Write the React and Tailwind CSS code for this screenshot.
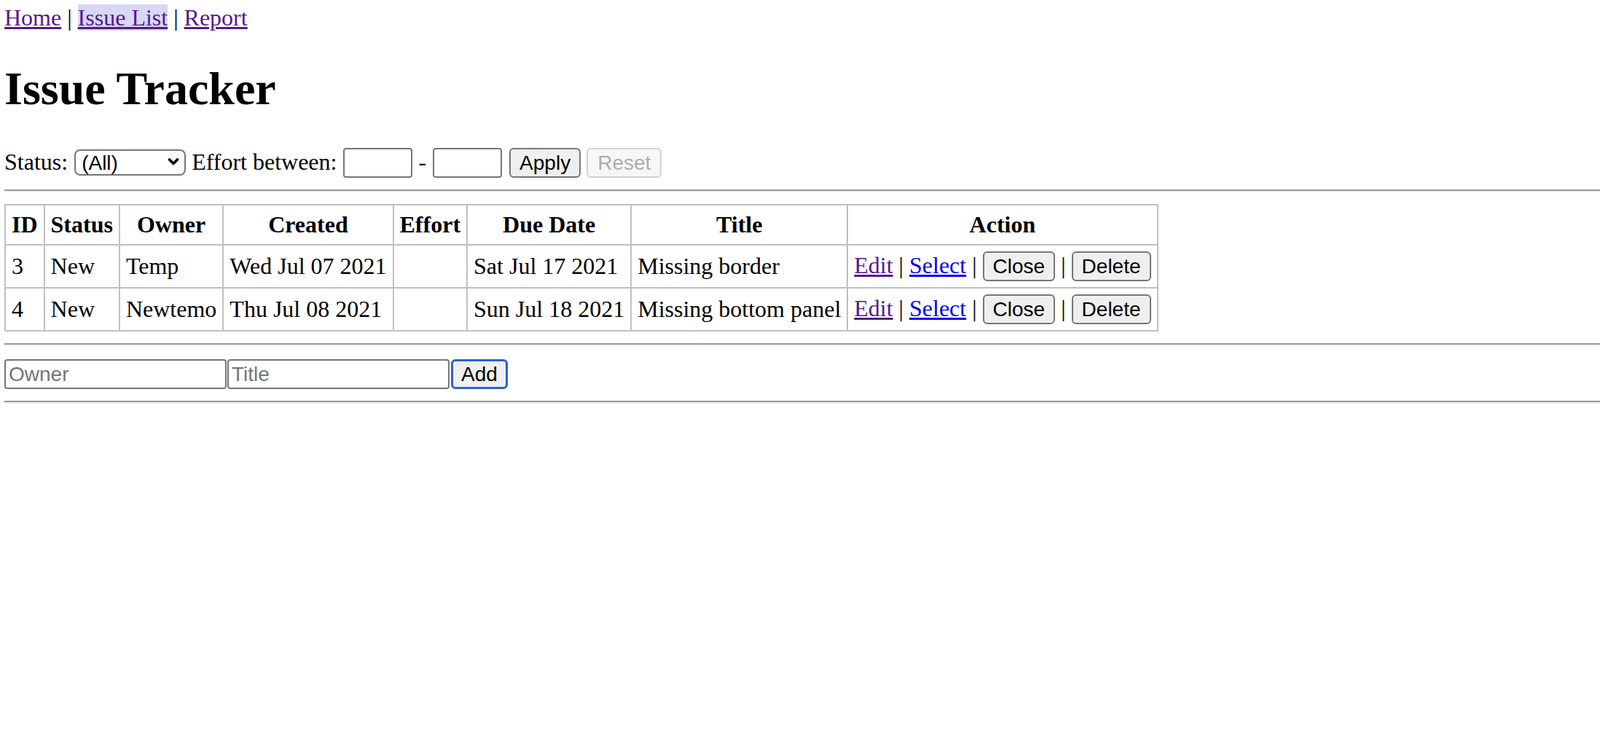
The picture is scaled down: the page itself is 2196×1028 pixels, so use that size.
import React from "react";

function Hr() {
  return <div className="my-[16px] h-0 border-t-2 border-b-2 border-t-[#9a9a9a] border-b-[#eeeeee]" />;
}

const ctrlFont = "font-['Liberation_Sans',Arial,sans-serif] text-[28px] leading-[normal]";
const btn = `${ctrlFont} inline-block h-[41px] px-[12px] rounded-[6px] border-2 border-[#767676] bg-[#efefef] text-black align-baseline`;
const textInput = `${ctrlFont} h-[41px] px-[4px] rounded-[4px] border-2 border-[#767676] bg-white text-black align-baseline placeholder:text-[#757575]`;
const cell = "border-2 border-[#c0c0c0] p-[8px]";
const th = `${cell} font-bold text-center`;

const rows = [
  { id: 3, status: "New", owner: "Temp", created: "Wed Jul 07 2021", effort: "", due: "Sat Jul 17 2021", title: "Missing border" },
  { id: 4, status: "New", owner: "Newtemo", created: "Thu Jul 08 2021", effort: "", due: "Sun Jul 18 2021", title: "Missing bottom panel" },
];

export default function App() {
  return (
    <div className="min-h-screen bg-white pt-[6px] pl-[6px] font-['Liberation_Serif','Times_New_Roman',serif] text-[32px] leading-[normal] text-black">
      <div>
        <a href="#" className="text-[#551a8b] underline">Home</a>
        {" | "}
        <a href="#" className="text-[#551a8b] underline bg-[#d8d8f5]">Issue List</a>
        {" | "}
        <a href="#" className="text-[#551a8b] underline">Report</a>
      </div>

      <h1 className="mt-[42px] mb-[44px] text-[64px] font-bold leading-[normal]">Issue Tracker</h1>

      <div>
        Status:{" "}
        <span className="relative inline-block align-baseline ml-[1px]">
          <select
            className={`${ctrlFont} appearance-none w-[153px] h-[36px] pl-[8px] pr-[30px] rounded-[8px] border-2 border-[#767676] bg-white text-black`}
            defaultValue="all"
          >
            <option value="all">(All)</option>
            <option value="New">New</option>
          </select>
          <svg
            className="pointer-events-none absolute right-[9px] top-1/2 -translate-y-1/2"
            width="16"
            height="12"
            viewBox="0 0 16 12"
          >
            <path d="M2.5 3 L8 8.5 L13.5 3" fill="none" stroke="#000" strokeWidth="3.6" strokeLinecap="round" strokeLinejoin="round" />
          </svg>
        </span>{" "}
        Effort between:{" "}
        <input className={`${textInput} w-[95px] ml-[1px]`} />
        {" - "}
        <input className={`${textInput} w-[95px] ml-[1px]`} />{" "}
        <button className={`${btn} ml-[2px]`}>Apply</button>{" "}
        <button
          disabled
          className={`${ctrlFont} inline-block h-[41px] px-[13px] rounded-[6px] border-2 border-[#d3d3d3] bg-[#f7f7f7] text-[#adadad] align-baseline`}
        >
          Reset
        </button>
      </div>

      <Hr />

      <table className="border-collapse">
        <thead>
          <tr>
            <th className={th}>ID</th>
            <th className={th}>Status</th>
            <th className={th}>Owner</th>
            <th className={th}>Created</th>
            <th className={th}>Effort</th>
            <th className={th}>Due Date</th>
            <th className={th}>Title</th>
            <th className={th}>Action</th>
          </tr>
        </thead>
        <tbody>
          {rows.map((r) => (
            <tr key={r.id}>
              <td className={cell}>{r.id}</td>
              <td className={cell}>{r.status}</td>
              <td className={cell}>{r.owner}</td>
              <td className={cell}>{r.created}</td>
              <td className={cell}>{r.effort}</td>
              <td className={cell}>{r.due}</td>
              <td className={cell}>{r.title}</td>
              <td className={`${cell} whitespace-nowrap`}>
                <a href="#" className="text-[#551a8b] underline">Edit</a>
                {" | "}
                <a href="#" className="text-[#0000ee] underline">Select</a>
                {" | "}
                <button className={btn}>Close</button>
                {" | "}
                <button className={btn}>Delete</button>
              </td>
            </tr>
          ))}
        </tbody>
      </table>

      <Hr />

      <form onSubmit={(e) => e.preventDefault()} className="pt-[2px]">
        <input className={`${textInput} w-[305px]`} placeholder="Owner" />
        <input className={`${textInput} w-[305px] ml-[1px]`} placeholder="Title" />
        <button className={`${ctrlFont} inline-block h-[41px] ml-[2px] px-[11px] rounded-[6px] border-[3px] border-[#2b62d0] bg-[#efefef] text-black align-baseline`}>
          Add
        </button>
      </form>

      <Hr />
    </div>
  );
}
